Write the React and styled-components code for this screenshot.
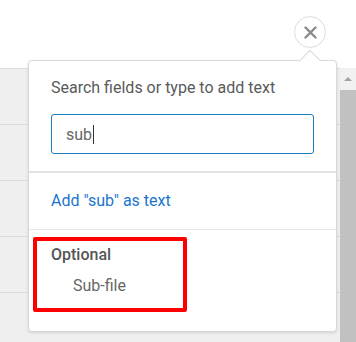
import React from "react";
import styled, { createGlobalStyle } from "styled-components";

const GlobalStyle = createGlobalStyle`
  html, body {
    margin: 0;
    padding: 0;
    background: #ffffff;
    font-family: Roboto, "Liberation Sans", Arial, sans-serif;
  }
`;

export const Page = styled.div`
  position: relative;
  width: 356px;
  height: 342px;
  overflow: hidden;
  display: flex;
  flex-direction: column;
  background: #ffffff;
`;

export const Header = styled.div`
  height: 68px;
  flex: none;
  background: #ffffff;
`;

export const Body = styled.div`
  flex: 1;
  display: flex;
  background: #efefef;
`;

export const Table = styled.div`
  flex: 1;
  display: flex;
  flex-direction: column;
`;

export const TableRow = styled.div`
  height: 56px;
  flex: none;
  border-top: 1px solid #dcdcdc;
  box-sizing: border-box;
`;

export const Scrollbar = styled.div`
  width: 16px;
  display: flex;
  flex-direction: column;
  background: #f1f1f1;
`;

export const ScrollArrow = styled.div`
  height: 22px;
  display: flex;
  align-items: center;
  justify-content: center;

  &::before {
    content: "";
    border-left: 4px solid transparent;
    border-right: 4px solid transparent;
    border-bottom: 4px solid #a3a3a3;
  }
`;

export const ScrollThumb = styled.div`
  flex: 1;
  background: #c1c1c1;
`;

export const CloseButton = styled.button`
  position: absolute;
  left: 294px;
  top: 16px;
  width: 32px;
  height: 32px;
  padding: 0;
  border-radius: 50%;
  border: 1px solid #dedede;
  background: #ffffff;
  display: flex;
  align-items: center;
  justify-content: center;
  box-sizing: border-box;
  cursor: pointer;
`;

export const Popover = styled.div`
  position: absolute;
  left: 28px;
  top: 60px;
  width: 309px;
  height: 272px;
  box-sizing: border-box;
  background: #ffffff;
  border: 1px solid #d9d9d9;
  border-radius: 4px;
  box-shadow: 0 1px 3px rgba(0, 0, 0, 0.12);
  display: flex;
  flex-direction: column;
`;

export const Arrow = styled.div`
  position: absolute;
  left: 273px;
  top: -8px;
  width: 15px;
  height: 15px;
  background: #ffffff;
  border-top: 1px solid #d9d9d9;
  border-left: 1px solid #d9d9d9;
  transform: rotate(45deg);
`;

export const Section = styled.div`
  padding: ${(p) => p.$pad};
  border-bottom: ${(p) => p.$divider || "none"};
`;

export const Label = styled.div`
  font-size: 16px;
  line-height: 19px;
  color: #5a5a5a;
`;

export const InputBox = styled.div`
  margin-top: 17px;
  height: 40px;
  box-sizing: border-box;
  border: 1px solid #1b7cc0;
  border-radius: 3px;
  padding: 0 14px;
  display: flex;
  align-items: center;
  font-size: 16px;
  color: #666666;
`;

export const Caret = styled.span`
  display: inline-block;
  width: 1px;
  height: 19px;
  margin-left: 1px;
  background: #333333;
`;

export const LinkText = styled.a`
  display: block;
  font-size: 16px;
  line-height: 19px;
  color: #1b75cf;
  text-decoration: none;
  cursor: pointer;
`;

export const Highlight = styled.div`
  width: 154px;
  height: 75px;
  box-sizing: border-box;
  border: 4px solid #ff0000;
  border-radius: 2px;
  padding: 4px 0 0 14px;
`;

export const GroupTitle = styled.div`
  font-size: 16px;
  line-height: 19px;
  font-weight: 500;
  color: #555555;
`;

export const Option = styled.div`
  margin-top: 12px;
  padding-left: 22px;
  font-size: 16px;
  line-height: 19px;
  color: #666666;
`;

const rows = [0, 1, 2, 3, 4];

function App() {
  return (
    <>
      <GlobalStyle />
      <Page>
        <Header />
        <Body>
          <Table>
            {rows.map((r) => (
              <TableRow key={r} />
            ))}
          </Table>
          <Scrollbar>
            <ScrollArrow />
            <ScrollThumb />
          </Scrollbar>
        </Body>

        <CloseButton aria-label="Close">
          <svg width="13" height="13" viewBox="0 0 13 13">
            <path
              d="M1.5 1.5 L11.5 11.5 M11.5 1.5 L1.5 11.5"
              stroke="#8a8a8a"
              strokeWidth="2.4"
              strokeLinecap="round"
            />
          </svg>
        </CloseButton>

        <Popover>
          <Arrow />
          <Section $pad="17px 22px 17px 22px" $divider="2px solid #e3e3e3">
            <Label>Search fields or type to add text</Label>
            <InputBox>
              sub
              <Caret />
            </InputBox>
          </Section>
          <Section $pad="18px 22px 19px 22px" $divider="1px solid #e6e6e6">
            <LinkText>Add "sub" as text</LinkText>
          </Section>
          <Section $pad="7px 0 0 4px">
            <Highlight>
              <GroupTitle>Optional</GroupTitle>
              <Option>Sub-file</Option>
            </Highlight>
          </Section>
        </Popover>
      </Page>
    </>
  );
}

export default App;
